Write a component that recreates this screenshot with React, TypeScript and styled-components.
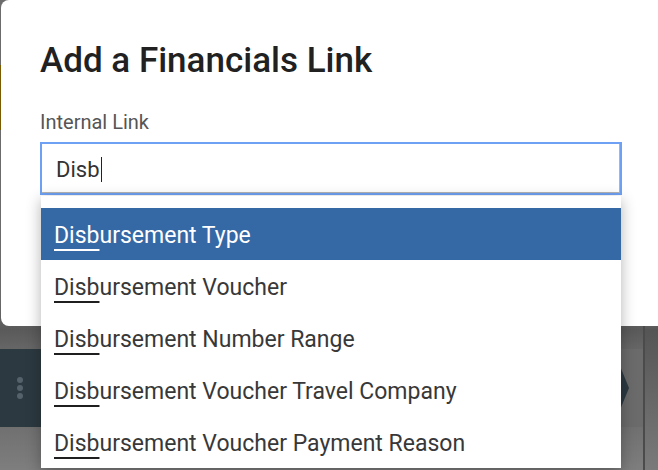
import React from 'react';
import styled, { createGlobalStyle } from 'styled-components';

const GlobalStyle = createGlobalStyle`
  html, body {
    margin: 0;
    padding: 0;
    background: #6b6b6b;
  }
  body {
    font-family: Roboto, "Liberation Sans", Arial, sans-serif;
  }
`;

export const Screen = styled.div`
  display: flex;
  height: 470px;
  overflow: hidden;
  position: relative;
  width: 658px;
`;

export const MainColumn = styled.div`
  display: flex;
  flex: 0 0 643px;
  flex-direction: column;
`;

export const TopArea = styled.div`
  background: linear-gradient(to bottom, #6c6c6c 0, #6a6a6a 300px, #5a5a5a 330px, #666 349px);
  box-sizing: border-box;
  display: flex;
  flex: 0 0 349px;
  padding-top: 65px;
`;

export const AccentStrip = styled.div`
  background: #7a5b04;
  height: 65px;
  width: 2px;
`;

export const CrumbBar = styled.div`
  align-items: center;
  background: #2c3940;
  clip-path: polygon(0 0, 613px 0, 629px 50%, 613px 100%, 0 100%);
  display: flex;
  flex: 0 0 78px;
  padding-left: 17px;
`;

export const Kebab = styled.div`
  display: flex;
  flex-direction: column;
  gap: 2px;

  span {
    background: #56626b;
    border-radius: 50%;
    height: 6px;
    width: 6px;
  }
`;

export const BottomArea = styled.div`
  background: linear-gradient(to bottom, #707070, #7e7e7e);
  flex: 1;
`;

export const Rail = styled.div`
  background: linear-gradient(to bottom, #6b6b6b 0, #6a6a6a 320px, #555 330px, #7a7a7a 470px);
  border-left: 2px solid #4b4b4b;
  flex: 1;
`;

export const Dialog = styled.div`
  background: #ffffff;
  border-radius: 8px;
  box-sizing: border-box;
  height: 326px;
  left: 1px;
  padding: 41px 0 0 39px;
  position: absolute;
  top: 0;
  width: 720px;
`;

export const Title = styled.h2`
  color: #212121;
  font-size: 35px;
  font-weight: 500;
  line-height: 40px;
  margin: 0 0 29px 0;
`;

export const FieldLabel = styled.label`
  color: #555555;
  display: block;
  font-size: 20px;
  line-height: 24px;
  margin-bottom: 8px;
`;

export const Field = styled.div`
  position: relative;
  width: 582px;
`;

export const InputBox = styled.div`
  align-items: center;
  border: 2px solid #6ea1f4;
  box-shadow: inset -1px -1px 0 #b4b4b4;
  box-sizing: border-box;
  color: #333333;
  display: flex;
  font-size: 22px;
  height: 53px;
  padding: 2px 0 0 14px;
`;

export const Caret = styled.span`
  background: #222222;
  display: inline-block;
  height: 25px;
  margin-left: 1px;
  width: 1px;
`;

export const Menu = styled.ul`
  background: #ffffff;
  box-shadow: 0 4px 14px rgba(0, 0, 0, 0.3);
  left: 1px;
  list-style: none;
  margin: 0;
  padding: 12px 0 0 0;
  position: absolute;
  right: 1px;
  top: calc(100% + 1px);
`;

export const MenuItem = styled.li<{ $active?: boolean }>`
  align-items: center;
  background: ${(p) => (p.$active ? '#3569a5' : 'transparent')};
  box-sizing: border-box;
  color: ${(p) => (p.$active ? '#ffffff' : '#383838')};
  display: flex;
  font-size: 23px;
  height: 52px;
  padding: 3px 0 0 13px;
  white-space: nowrap;

  u {
    text-decoration-color: ${(p) => (p.$active ? '#ffffff' : '#1f1f1f')};
    text-decoration-thickness: 2px;
    text-underline-offset: 6px;
  }
`;

const query = 'Disb';

const options = [
  'Disbursement Type',
  'Disbursement Voucher',
  'Disbursement Number Range',
  'Disbursement Voucher Travel Company',
  'Disbursement Voucher Payment Reason',
];

export default function App() {
  return (
    <>
      <GlobalStyle />
      <Screen>
        <MainColumn>
          <TopArea>
            <AccentStrip />
          </TopArea>
          <CrumbBar>
            <Kebab>
              <span />
              <span />
              <span />
            </Kebab>
          </CrumbBar>
          <BottomArea />
        </MainColumn>
        <Rail />

        <Dialog role="dialog">
          <Title>Add a Financials Link</Title>
          <FieldLabel>Internal Link</FieldLabel>
          <Field>
            <InputBox>
              {query}
              <Caret />
            </InputBox>
            <Menu>
              {options.map((opt, i) => (
                <MenuItem key={opt} $active={i === 0}>
                  <u>{opt.slice(0, query.length)}</u>
                  {opt.slice(query.length)}
                </MenuItem>
              ))}
            </Menu>
          </Field>
        </Dialog>
      </Screen>
    </>
  );
}
